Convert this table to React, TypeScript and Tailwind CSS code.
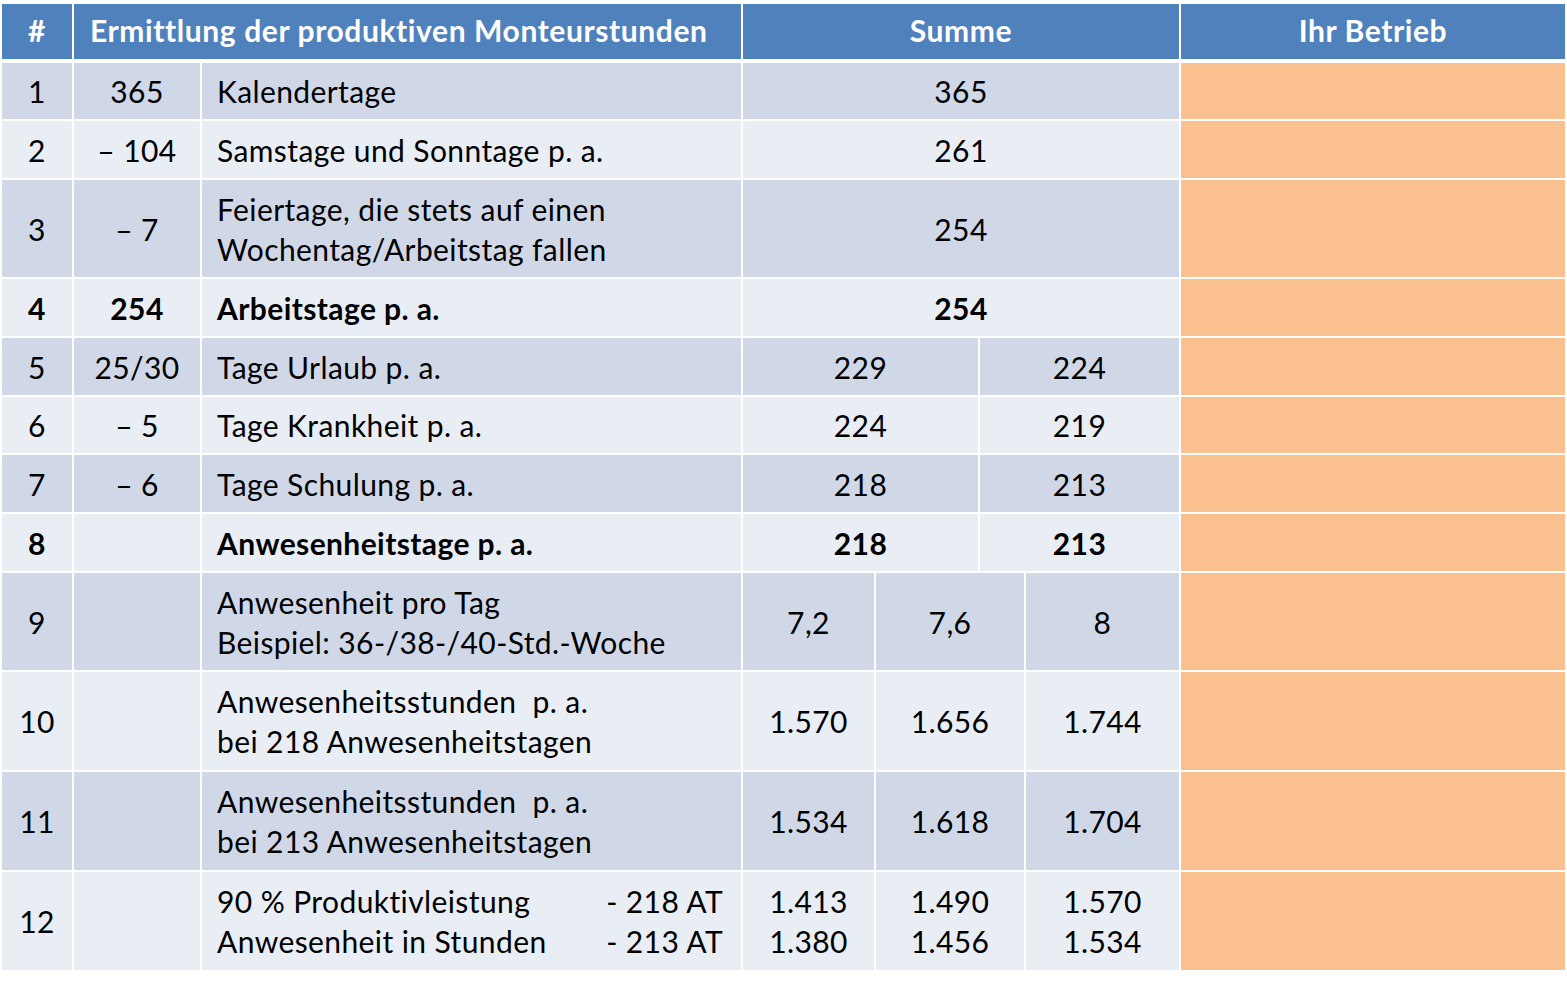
import React from "react";

const dark = "bg-[#d0d8e8]";
const light = "bg-[#e9edf4]";

type Row = {
  n: string;
  v: string;
  label: React.ReactNode;
  sums: { text: React.ReactNode; span: number }[];
  h: string;
  bold?: boolean;
};

const rows: Row[] = [
  { n: "1", v: "365", label: "Kalendertage", sums: [{ text: "365", span: 4 }], h: "h-[56px]" },
  { n: "2", v: "– 104", label: "Samstage und Sonntage p. a.", sums: [{ text: "261", span: 4 }], h: "h-[57px]" },
  {
    n: "3",
    v: "– 7",
    label: (
      <>
        Feiertage, die stets auf einen
        <br />
        Wochentag/Arbeitstag fallen
      </>
    ),
    sums: [{ text: "254", span: 4 }],
    h: "h-[97px]",
  },
  { n: "4", v: "254", label: "Arbeitstage p. a.", sums: [{ text: "254", span: 4 }], h: "h-[57px]", bold: true },
  {
    n: "5",
    v: "25/30",
    label: "Tage Urlaub p. a.",
    sums: [
      { text: "229", span: 2 },
      { text: "224", span: 2 },
    ],
    h: "h-[57px]",
  },
  {
    n: "6",
    v: "– 5",
    label: "Tage Krankheit p. a.",
    sums: [
      { text: "224", span: 2 },
      { text: "219", span: 2 },
    ],
    h: "h-[56px]",
  },
  {
    n: "7",
    v: "– 6",
    label: "Tage Schulung p. a.",
    sums: [
      { text: "218", span: 2 },
      { text: "213", span: 2 },
    ],
    h: "h-[57px]",
  },
  {
    n: "8",
    v: "",
    label: "Anwesenheitstage p. a.",
    sums: [
      { text: "218", span: 2 },
      { text: "213", span: 2 },
    ],
    h: "h-[57px]",
    bold: true,
  },
  {
    n: "9",
    v: "",
    label: (
      <>
        Anwesenheit pro Tag
        <br />
        Beispiel: 36-/38-/40-Std.-Woche
      </>
    ),
    sums: [
      { text: "7,2", span: 1 },
      { text: "7,6", span: 2 },
      { text: "8", span: 1 },
    ],
    h: "h-[97px]",
  },
  {
    n: "10",
    v: "",
    label: (
      <>
        Anwesenheitsstunden&nbsp; p. a.
        <br />
        bei 218 Anwesenheitstagen
      </>
    ),
    sums: [
      { text: "1.570", span: 1 },
      { text: "1.656", span: 2 },
      { text: "1.744", span: 1 },
    ],
    h: "h-[98px]",
  },
  {
    n: "11",
    v: "",
    label: (
      <>
        Anwesenheitsstunden&nbsp; p. a.
        <br />
        bei 213 Anwesenheitstagen
      </>
    ),
    sums: [
      { text: "1.534", span: 1 },
      { text: "1.618", span: 2 },
      { text: "1.704", span: 1 },
    ],
    h: "h-[98px]",
  },
  {
    n: "12",
    v: "",
    label: (
      <div className="flex justify-between">
        <span>
          90 % Produktivleistung
          <br />
          Anwesenheit in Stunden
        </span>
        <span>
          - 218 AT
          <br />
          - 213 AT
        </span>
      </div>
    ),
    sums: [
      {
        text: (
          <>
            1.413
            <br />
            1.380
          </>
        ),
        span: 1,
      },
      {
        text: (
          <>
            1.490
            <br />
            1.456
          </>
        ),
        span: 2,
      },
      {
        text: (
          <>
            1.570
            <br />
            1.534
          </>
        ),
        span: 1,
      },
    ],
    h: "h-[98px]",
  },
];

export default function App() {
  return (
    <div className="w-[1567px] h-[982px] bg-white pt-[2px] font-['Lato',sans-serif] text-[30px] leading-[40px] tracking-[0.4px] text-black overflow-hidden">
      <table className="table-fixed border-separate border-spacing-[2px] w-[1567px]">
        <colgroup>
          <col className="w-[70px]" />
          <col className="w-[126px]" />
          <col className="w-[539px]" />
          <col className="w-[131px]" />
          <col className="w-[102px]" />
          <col className="w-[44px]" />
          <col className="w-[153px]" />
          <col className="w-[384px]" />
        </colgroup>
        <thead>
          <tr className="text-white font-bold tracking-[0.6px] leading-[36px]">
            <th className="h-[57px] p-0 pb-[4px] bg-[#4f81bd] border-b-2 border-white text-center">#</th>
            <th colSpan={2} className="h-[57px] p-0 pb-[4px] pl-[16px] bg-[#4f81bd] border-b-2 border-white text-left">
              Ermittlung der produktiven Monteurstunden
            </th>
            <th colSpan={4} className="h-[57px] p-0 pb-[4px] bg-[#4f81bd] border-b-2 border-white text-center">
              Summe
            </th>
            <th className="h-[57px] p-0 pb-[4px] bg-[#4f81bd] border-b-2 border-white text-center">Ihr Betrieb</th>
          </tr>
        </thead>
        <tbody>
          {rows.map((r, i) => {
            const bg = i % 2 === 0 ? dark : light;
            return (
              <tr key={r.n} className={r.bold ? "font-bold" : ""}>
                <td className={`${r.h} ${bg} p-0 text-center align-middle`}>{r.n}</td>
                <td className={`${r.h} ${bg} p-0 text-center align-middle`}>{r.v}</td>
                <td className={`${r.h} ${bg} p-0 pl-[15px] pr-[18px] text-left align-middle`}>{r.label}</td>
                {r.sums.map((s, j) => (
                  <td key={j} colSpan={s.span} className={`${r.h} ${bg} p-0 text-center align-middle`}>
                    {s.text}
                  </td>
                ))}
                <td className={`${r.h} bg-[#fac090] p-0`} />
              </tr>
            );
          })}
        </tbody>
      </table>
    </div>
  );
}
